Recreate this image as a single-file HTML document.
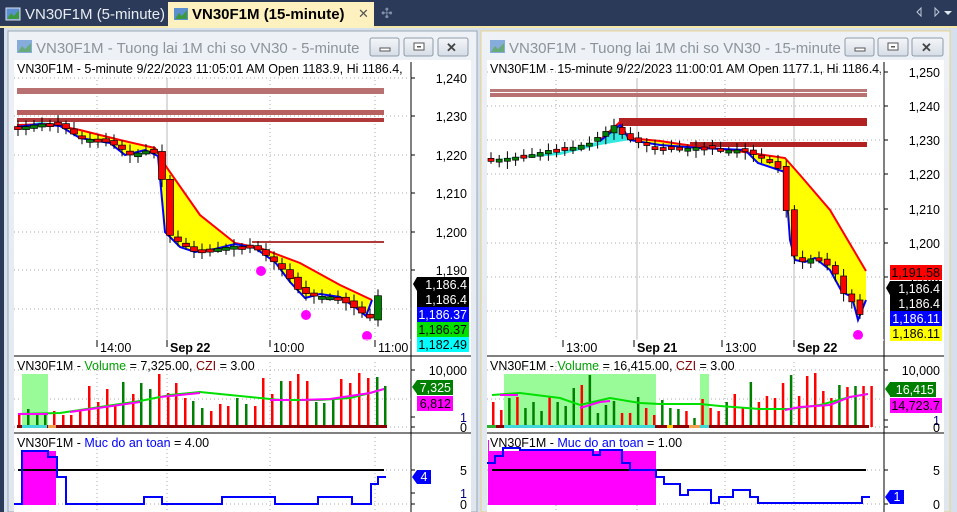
<!DOCTYPE html><html><head><meta charset="utf-8"><style>
html,body{margin:0;padding:0;width:957px;height:512px;overflow:hidden;background:#2b3a58;font-family:"Liberation Sans",sans-serif}
svg text{font-family:"Liberation Sans",sans-serif}
</style></head><body>
<svg id="s" width="957" height="512" xmlns="http://www.w3.org/2000/svg">
<defs>
<linearGradient id="tb" x1="0" y1="0" x2="0" y2="1"><stop offset="0" stop-color="#eef2f7"/><stop offset="1" stop-color="#dfe6ee"/></linearGradient>
<linearGradient id="bt" x1="0" y1="0" x2="0" y2="1"><stop offset="0" stop-color="#f4f6f9"/><stop offset="1" stop-color="#d6dde6"/></linearGradient>
<clipPath id="c1"><rect x="14" y="60" width="393" height="18"/></clipPath>
<clipPath id="c2"><rect x="488" y="60" width="393" height="18"/></clipPath>
</defs>
<rect x="0" y="0" width="957" height="28" fill="#2b3a58"/>
<rect x="0" y="26" width="957" height="2" fill="#f5e7a8"/>
<g>
<rect x="6" y="8" width="14" height="12" fill="#5a8fd0" stroke="#dde" stroke-width="1"/><path d="M7 19 L11 13 L14 16 L19 10 L19 19Z" fill="#3c9a3c"/>
<text x="25" y="19" font-size="15" fill="#e8ecf2">VN30F1M (5-minute)</text>
<rect x="168" y="2" width="206" height="26" fill="#fdf1c0"/>
<rect x="174" y="8" width="14" height="12" fill="#5a8fd0"/><path d="M175 19 L179 13 L182 16 L187 10 L187 19Z" fill="#3c9a3c"/>
<text x="192" y="19" font-size="15" font-weight="bold" fill="#000">VN30F1M (15-minute)</text>
<text x="358" y="18" font-size="13" fill="#555">✕</text>
<text x="381" y="18" font-size="14" fill="#8090a8">✣</text>
<path d="M921 8 L917 12 L921 16Z M935 8 L939 12 L935 16Z" fill="none" stroke="#c0c8d8"/><path d="M944 11 L952 11 L948 15Z" fill="#e0e6ee"/>
</g>
<rect x="0" y="28" width="957" height="484" fill="#d6e0ec"/>
<rect x="0" y="28" width="4" height="484" fill="#2b3a58"/>

<rect x="8" y="31" width="469" height="481" fill="url(#tb)" stroke="#9aa6b4"/>
<rect x="17" y="40" width="15" height="13" fill="#5a8fd0" opacity=".7"/><path d="M18 52 L22 46 L25 49 L31 43 L31 52Z" fill="#62aa62" opacity=".8"/>
<text x="36" y="53" font-size="15" fill="#8c939b">VN30F1M - Tuong lai 1M chi so VN30 - 5-minute</text>
<g stroke="#8e9aa8" fill="url(#bt)"><rect x="370" y="38" width="29" height="18" rx="2"/><rect x="404" y="38" width="29" height="18" rx="2"/><rect x="438" y="38" width="30" height="18" rx="2"/></g>
<rect x="380" y="48" width="10" height="3" fill="#fff" stroke="#555"/><rect x="414" y="43" width="10" height="7" fill="#fff" stroke="#555"/><rect x="417" y="46" width="4" height="1.5" fill="#555"/>
<text x="446" y="52" font-size="13" fill="#444" font-weight="bold">✕</text>
<rect x="14" y="60" width="457" height="452" fill="#fff"/>

<rect x="481" y="31" width="469" height="481" fill="url(#tb)" stroke="#e6d28a"/>
<rect x="490" y="40" width="15" height="13" fill="#5a8fd0" opacity=".7"/><path d="M491 52 L495 46 L498 49 L504 43 L504 52Z" fill="#62aa62" opacity=".8"/>
<text x="509" y="53" font-size="15" fill="#8c939b">VN30F1M - Tuong lai 1M chi so VN30 - 15-minute</text>
<g stroke="#8e9aa8" fill="url(#bt)"><rect x="845" y="38" width="29" height="18" rx="2"/><rect x="878" y="38" width="30" height="18" rx="2"/><rect x="912" y="38" width="31" height="18" rx="2"/></g>
<rect x="855" y="48" width="10" height="3" fill="#fff" stroke="#555"/><rect x="888" y="43" width="10" height="7" fill="#fff" stroke="#555"/><rect x="891" y="46" width="4" height="1.5" fill="#555"/>
<text x="921" y="52" font-size="13" fill="#444" font-weight="bold">✕</text>
<rect x="487" y="60" width="457" height="452" fill="#fff"/>
<g id="dyn"></g>
</svg>
<script>
var g=document.getElementById('dyn');var h='';
function A(s){h+=s;}
function grid(x1,x2,ys,xs,y1,y2){ys.forEach(function(y){A('<line x1="'+x1+'" x2="'+x2+'" y1="'+y+'" y2="'+y+'" stroke="#aaa" stroke-dasharray="1,3"/>');});
xs.forEach(function(x){A('<line x1="'+x+'" x2="'+x+'" y1="'+y1+'" y2="'+y2+'" stroke="#aaa" stroke-dasharray="1,3"/>');});}
function interp(pts,x){for(var i=0;i<pts.length-1;i++){if(x>=pts[i][0]&&x<=pts[i+1][0]){var t=(x-pts[i][0])/(pts[i+1][0]-pts[i][0]);return pts[i][1]+t*(pts[i+1][1]-pts[i][1]);}}return pts[pts.length-1][1];}
function P(p){return p.map(function(q){return q.join(',')}).join(' ');}
function chart(o){
 var L=o.L,R=o.ax;
 A('<text x="'+(L+3)+'" y="73" font-size="12.5" clip-path="url(#'+o.clip+')">'+o.hdr+'</text>');
 A('<line x1="'+R+'" x2="'+R+'" y1="62" y2="512" stroke="#000"/>');
 grid(L,R,o.pys,o.vx,80,340);
 o.vline.forEach(function(x){A('<line x1="'+x+'" x2="'+x+'" y1="78" y2="340" stroke="#b8b8b8"/>');});
 o.bands.forEach(function(b){A('<rect x="'+b[0]+'" y="'+b[1]+'" width="'+(b[2]-b[0])+'" height="'+b[3]+'" fill="'+b[4]+'"/>');});
 var top=o.red,bot=o.blue;
 var poly=top.concat(bot.slice().reverse());
 A('<polygon points="'+P(poly)+'" fill="#ffff00"/>');
 if(o.cyan)A('<polygon points="'+P(o.cyan)+'" fill="#33e8e0"/>');
 A('<polyline points="'+P(top)+'" fill="none" stroke="#ff0000" stroke-width="2"/>');
 A('<polyline points="'+P(bot)+'" fill="none" stroke="#0000ff" stroke-width="2"/>');
 var prev=interp(o.cl,o.cl[0][0]);
 for(var x=o.cl[0][0];x<=o.cl[o.cl.length-1][0];x+=o.step){
  var c=interp(o.cl,x),op=prev+(Math.sin(x*1.7)*2);
  var up=c<op,hi=Math.min(c,op)-3-Math.abs(Math.sin(x))*4,lo=Math.max(c,op)+2+Math.abs(Math.cos(x*.7))*6;
  A('<line x1="'+x+'" x2="'+x+'" y1="'+hi+'" y2="'+lo+'" stroke="#000"/>');
  var hh=Math.max(3,Math.abs(c-op));
  A('<rect x="'+(x-o.cw/2)+'" y="'+Math.min(c,op)+'" width="'+o.cw+'" height="'+hh+'" fill="'+(up?'#008000':'#ff0000')+'" stroke="#000" stroke-width=".7"/>');
  prev=c;}
 o.dots.forEach(function(d){A('<circle cx="'+d[0]+'" cy="'+d[1]+'" r="5" fill="#ff00ff"/>');});
 o.plab.forEach(function(p){A('<line x1="'+R+'" x2="'+(R+4)+'" y1="'+p[1]+'" y2="'+p[1]+'" stroke="#000"/><text x="'+(R+56)+'" y="'+(p[1]+5)+'" font-size="12.5" text-anchor="end">'+p[0]+'</text>');});
 o.tags.forEach(function(t){var x=R+6;if(t[4])A('<polygon points="'+(x-4)+','+(t[1]+7)+' '+x+','+t[1]+' '+x+','+(t[1]+14)+'" fill="'+t[2]+'"/>');
  A('<rect x="'+x+'" y="'+t[1]+'" width="'+(o.tw)+'" height="15" fill="'+t[2]+'"/><text x="'+(x+o.tw-2)+'" y="'+(t[1]+12)+'" font-size="12.5" text-anchor="end" fill="'+t[3]+'">'+t[0]+'</text>');});
 A('<line x1="'+L+'" x2="'+R+'" y1="340" y2="340" stroke="#fff"/>');
 o.xl.forEach(function(t){A('<line x1="'+t[1]+'" x2="'+t[1]+'" y1="340" y2="347" stroke="#000"/><text x="'+(t[1]+3)+'" y="352" font-size="12.5" '+(t[2]?'font-weight="bold"':'')+'>'+t[0]+'</text>');});
 A('<line x1="'+L+'" x2="'+(L+457)+'" y1="356" y2="356" stroke="#000"/>');
 grid(L,R,[370,399,427],o.vx,362,430);
 o.gsh.forEach(function(s){A('<rect x="'+s[0]+'" y="374" width="'+(s[1]-s[0])+'" height="53" fill="#98fb98"/>');});
 A('<text x="'+(L+3)+'" y="370" font-size="12.5">VN30F1M - <tspan fill="#00a000">Volume</tspan> = '+o.vol+', <tspan fill="#800000">CZI</tspan> = 3.00</text>');
 o.vb.forEach(function(b){A('<rect x="'+b[0]+'" y="'+b[1]+'" width="2.5" height="'+(427-b[1])+'" fill="'+b[2]+'"/>');});
 A('<rect x="'+(L+3)+'" y="425" width="'+(o.vbend-L-3)+'" height="3" fill="#8b0000"/>');
 o.vstrip.forEach(function(s){A('<rect x="'+s[0]+'" y="425" width="'+(s[1]-s[0])+'" height="3" fill="'+s[2]+'"/>');});
 A('<polyline points="'+P(o.ma)+'" fill="none" stroke="#00e000" stroke-width="2"/>');
 if(o.ma2)o.ma2.forEach(function(m){A('<polyline points="'+P(m)+'" fill="none" stroke="#ff00ff" stroke-width="2"/>');});
 o.vlab.forEach(function(p){A('<line x1="'+R+'" x2="'+(R+4)+'" y1="'+p[1]+'" y2="'+p[1]+'" stroke="#000"/><text x="'+(R+56)+'" y="'+(p[1]+5)+'" font-size="12.5" text-anchor="end" fill="'+(p[2]||'#000')+'">'+p[0]+'</text>');});
 o.vtags.forEach(function(t){var x=R+6;if(t[4])A('<polygon points="'+(x-5)+','+(t[1]+7)+' '+x+','+t[1]+' '+x+','+(t[1]+14)+'" fill="'+t[2]+'"/>');
  A('<rect x="'+x+'" y="'+t[1]+'" width="'+t[5]+'" height="15" fill="'+t[2]+'"/><text x="'+(x+t[5]-2)+'" y="'+(t[1]+12)+'" font-size="12.5" text-anchor="end" fill="'+t[3]+'">'+t[0]+'</text>');});
 A('<line x1="'+L+'" x2="'+(L+457)+'" y1="433" y2="433" stroke="#000"/>');
 grid(L,R,[470,504],o.vx,437,512);
 A('<rect x="'+o.mag[0]+'" y="'+o.mag[1]+'" width="'+(o.mag[2]-o.mag[0])+'" height="'+(505-o.mag[1])+'" fill="#ff00ff"/>');
 A('<rect x="'+(L+2)+'" y="436" width="'+o.mw+'" height="15" fill="#fff"/>');
 A('<text x="'+(L+3)+'" y="447" font-size="12.5">VN30F1M - <tspan fill="#0000ff">Muc do an toan</tspan> = '+o.muc+'</text>');
 A('<line x1="'+o.bl[0]+'" x2="'+o.bl[1]+'" y1="470" y2="470" stroke="#000" stroke-width="2"/>');
 A('<polyline points="'+P(o.step2)+'" fill="none" stroke="#0000ff" stroke-width="2"/>');
 o.mlab.forEach(function(p){A('<line x1="'+R+'" x2="'+(R+4)+'" y1="'+p[1]+'" y2="'+p[1]+'" stroke="#000"/><text x="'+(R+56)+'" y="'+(p[1]+5)+'" font-size="12.5" text-anchor="end" fill="'+(p[2]||'#000')+'">'+p[0]+'</text>');});
 var mt=o.mtag;A('<polygon points="'+(R+1)+','+(mt[1]+7)+' '+(R+6)+','+mt[1]+' '+(R+6)+','+(mt[1]+14)+'" fill="#0000ff"/><rect x="'+(R+6)+'" y="'+mt[1]+'" width="14" height="14" fill="#0000ff"/><text x="'+(R+13)+'" y="'+(mt[1]+11)+'" font-size="12.5" fill="#fff" text-anchor="middle">'+mt[0]+'</text>');
}
chart({L:14,ax:411,clip:'c1',hdr:'VN30F1M - 5-minute 9/22/2023 11:05:01 AM Open 1183.9, Hi 1186.4, Lo 1182.5',
 pys:[78,116,155,193,232,270,309],vx:[97,167,270,375],vline:[167],
 bands:[[17,88,384,6,'#b87070'],[17,110,384,5,'#b86060'],[17,118,384,4,'#b03a3a'],[252,241,384,2,'#b03a3a']],
 red:[[17,125],[50,124],[80,130],[120,140],[155,148],[165,165],[200,215],[235,243],[260,248],[300,263],[340,285],[372,300]],
 blue:[[17,127],[40,124],[60,126],[80,138],[110,143],[125,155],[145,150],[158,156],[165,232],[180,247],[195,252],[215,249],[235,244],[255,248],[275,262],[290,282],[305,298],[320,294],[340,297],[355,307],[366,316],[372,300]],
 cyan:[[17,126],[40,122],[60,124],[40,126]],
 cl:[[18,128],[40,124],[55,124],[65,128],[80,138],[95,140],[110,143],[120,148],[130,155],[150,150],[160,158],[167,233],[180,243],[195,252],[215,249],[235,246],[255,248],[270,258],[285,272],[300,292],[315,296],[335,297],[350,305],[362,313],[370,318],[376,298],[383,290]],step:8,cw:7,
 dots:[[261,271],[306,315],[367,336]],
 plab:[['1,240',78],['1,230',116],['1,220',155],['1,210',193],['1,200',232],['1,190',270]],
 tw:52,tags:[['1,186.4',277,'#000','#fff',1],['1,186.4',292,'#000','#fff'],['1,186.37',307,'#0000ff','#fff'],['1,186.37',322,'#00e000','#000'],['1,182.49',337,'#00ffff','#000']],
 xl:[['14:00',97],['Sep 22',167,1],['10:00',270],['11:00',375]],
 gsh:[[22,48]],vol:'7,325.00',
 vb:(function(){var xs=[18,27,36,44,53,62,70,79,88,97,106,114,122,132,140,149,158,167,175,184,192,201,210,219,227,236,245,254,262,271,280,289,297,306,315,323,332,340,349,358,367,376,384];
  var ys=[414,409,413,413,411,415,415,410,386,402,389,404,382,394,383,389,374,393,383,398,401,408,411,404,406,398,404,406,378,394,381,381,374,381,402,403,400,379,383,373,378,377,386];
  var cs='rgggrrrrrrrrgrggrrrrggrrrggrrrgrrrgggrrrrgg';return xs.map(function(x,i){return [x,ys[i],cs[i]=='g'?'#008000':'#ff0000'];});})(),
 vbend:387,vstrip:[[22,47,'#40d8d8'],[48,56,'#f0a050']],
 ma:[[18,414],[60,413],[100,407],[140,401],[170,395],[200,392],[230,395],[260,398],[280,400],[300,400],[320,400],[350,398],[370,393],[384,389]],
 ma2:[[[18,414],[48,414]],[[70,412],[140,402]],[[160,397],[200,393]],[[270,400],[290,400]],[[300,400],[330,399],[370,393],[384,389]]],
 vlab:[['10,000',370],['1',417,'#000080'],['0',427]],
 vtags:[['7,325',380,'#008000','#fff',1,36],['6,812',396,'#ff00ff','#000',0,36]],
 mag:[22,451,56],muc:'4.00',bl:[18,384],mw:0,
 step2:[[14,504],[22,504],[22,451],[48,451],[48,457],[57,457],[57,477],[66,477],[66,504],[144,504],[144,497],[162,497],[162,504],[222,504],[222,497],[275,497],[275,504],[318,504],[318,497],[352,497],[352,504],[371,504],[371,484],[378,484],[378,477],[386,477]],
 mlab:[['5',470],['1',493,'#000080'],['0',504]],mtag:['4',470]});
chart({L:487,ax:884,clip:'c2',hdr:'VN30F1M - 15-minute 9/22/2023 11:00:01 AM Open 1177.1, Hi 1186.4, Lo 1182.5',
 pys:[72,106,140,174,209,243,277,311],vx:[556,637,725,794],vline:[637,794],
 bands:[[490,89,867,3,'#b87878'],[490,93,867,4,'#b87070'],[619,118,867,8,'#b22222'],[690,142,867,5,'#b22222']],
 red:[[600,140],[620,122],[628,138],[660,141],[700,147],[730,150],[785,158],[800,175],[830,210],[866,271]],
 blue:[[600,141],[620,125],[630,140],[660,145],[700,148],[745,150],[758,163],[785,172],[790,240],[795,260],[805,262],[815,258],[830,270],[842,292],[852,297],[858,320],[866,300]],
 cyan:[[490,160],[560,152],[600,141],[620,125],[630,140],[600,145],[560,155]],
 cl:[[491,160],[510,158],[530,155],[550,150],[570,148],[590,143],[605,132],[615,125],[625,138],[640,143],[660,148],[680,149],[700,147],[720,150],[740,150],[755,155],[768,160],[780,170],[793,255],[803,262],[813,258],[823,263],[833,268],[843,293],[851,300],[859,318],[867,290]],step:8.2,cw:6,
 dots:[[858,335]],
 plab:[['1,250',72],['1,240',106],['1,230',140],['1,220',174],['1,210',209],['1,200',243],['1,190',277]],
 tw:52,tags:[['1,191.58',265,'#ff0000','#000',0],['1,186.4',281,'#000','#fff',1],['1,186.4',296,'#000','#fff'],['1,186.11',311,'#0000ff','#fff'],['1,186.11',326,'#ffff00','#000']],
 xl:[['13:00',563],['Sep 21',634,1],['13:00',722],['Sep 22',794,1]],
 gsh:[[504,656],[700,709]],vol:'16,415.00',
 vb:(function(){var r=[];var ys=[402,410,398,397,408,402,411,396,402,406,388,385,375,413,405,401,413,413,397,408,415,400,408,409,411,418,399,408,411,402,394,408,382,402,396,398,383,375,396,376,373,391,398,385,387,386,386,386];
  var cs='rrgrgggrgggrggggrrgrrgggrgrrrgrrgrrrrgrrrrrgrgrr';for(var i=0;i<ys.length;i++)r.push([492+i*8.05,ys[i],cs[i]=='g'?'#008000':'#ff0000']);return r;})(),
 vbend:869,vstrip:[[487,496,'#30b030'],[496,504,'#8b0000'],[504,655,'#40d8d8'],[667,673,'#ffd000'],[678,686,'#8b0000'],[689,700,'#f0a050'],[700,709,'#40d8d8']],
 ma:[[492,395],[520,393],[560,398],[580,405],[610,398],[640,403],[660,404],[700,404],[720,406],[760,409],[790,409],[820,405],[850,397],[868,394]],
 ma2:[[[500,395],[518,395]],[[580,408],[600,402],[610,401]],[[785,410],[800,407],[830,405],[850,397],[868,394]]],
 vlab:[['10,000',370],['1',420,'#000080'],['0',427]],
 vtags:[['16,415',382,'#008000','#fff',1,46],['14,723.7',398,'#ff00ff','#000',0,52]],
 mag:[488,440,656],muc:'1.00',bl:[492,866],mw:186,
 step2:[[487,463],[495,463],[495,456],[503,456],[503,448],[520,448],[520,450],[593,450],[593,455],[600,455],[600,450],[622,450],[622,463],[630,463],[630,470],[656,470],[656,477],[664,477],[664,484],[680,484],[680,495],[688,495],[688,490],[711,490],[711,503],[719,503],[719,497],[733,497],[733,490],[750,490],[750,497],[758,497],[758,503],[862,503],[862,497],[870,497]],
 mlab:[['5',470],['0',504]],mtag:['1',490]});
g.innerHTML=h;
</script>
</body></html>
